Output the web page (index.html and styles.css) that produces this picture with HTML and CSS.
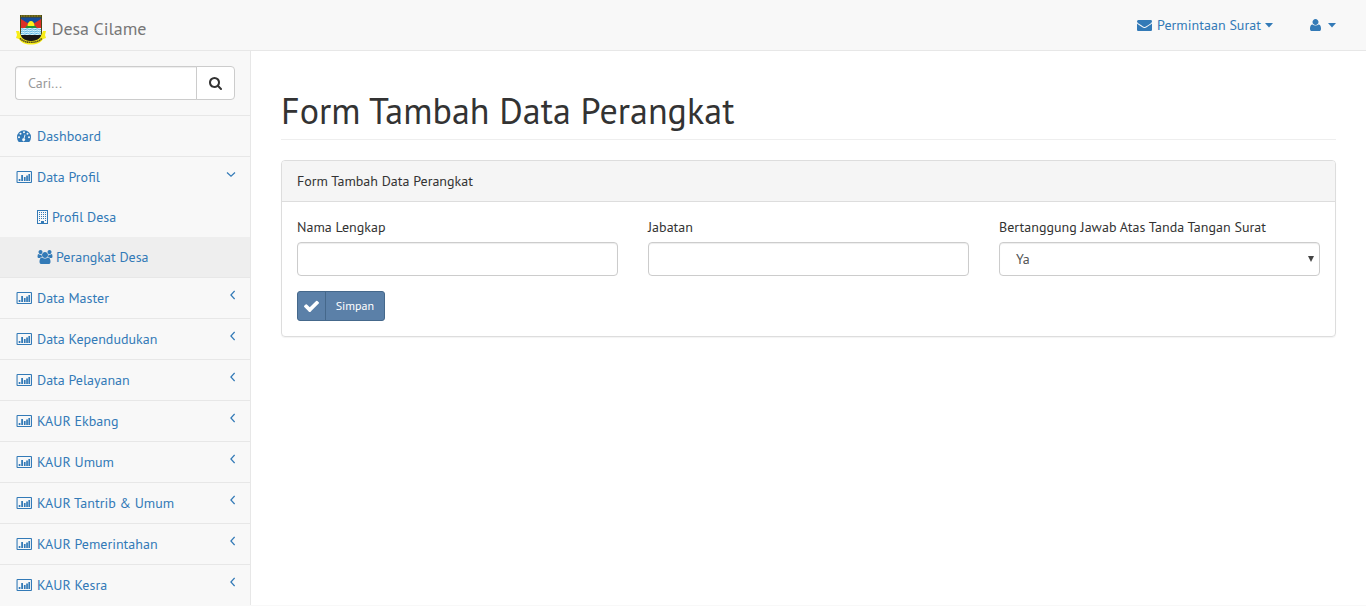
FILE: index.html
```
<!DOCTYPE html>
<html lang="id">
<head>
<meta charset="utf-8">
<title>Desa Cilame</title>
<link rel="stylesheet" href="styles.css">
</head>
<body>
<svg class="sprite" aria-hidden="true">
  <symbol id="chart" viewBox="0 0 16 14"><path fill-rule="evenodd" d="M1.500 1h13.500a1 1 0 0 1 1 1v10a1 1 0 0 1-1 1H1.500a1 1 0 0 1-1-1V2a1 1 0 0 1 1-1zm.1 1.100v9.800h13.300V2.100z"/><path d="M2.700 9h1.700v2H2.700zM5.200 5h1.800v6H5.200zM7.900 7h1.700v4H7.900zM10.200 5.500h1.700v5.500h-1.700zM12.400 4h1.600v7h-1.600z"/></symbol>
  <symbol id="left" viewBox="0 0 5 10"><path d="M4.600 1L.900 5l3.700 4" fill="none" stroke="currentColor" stroke-width="1.200"/></symbol>
  <symbol id="caret" viewBox="0 0 8 5"><path d="M0 0h8L4 4.500z"/></symbol>
</svg>
<header class="navbar">
  <a class="brand">
    <svg class="crest" viewBox="0 0 32 32">
      <path d="M5 1h22v18c0 6-5 8-11 10C10 27 5 25 5 19z" fill="#4b4715"/>
      <path d="M6 2h20" stroke="#b7a92a" stroke-width="1" stroke-dasharray="1 .6"/>
      <path d="M6 3.500h20V14H6z" fill="#154c9c"/>
      <path d="M6 5l8 5-3 4H6zM26 5l-8 5 3 4h5z" fill="#dc3027"/>
      <path d="M10 14 13 10.500h6l3 3.500z" fill="#248f39"/>
      <path d="M12.500 12a3.500 5 0 0 1 7 0z" fill="#fff21b"/>
      <path d="M6 14h20v7H6z" fill="#d5f2fb"/>
      <path d="M6 15.300q1.250-1 2.500 0t2.500 0 2.500 0 2.500 0 2.500 0 2.500 0 2.500 0 2.500 0M6 17.500q1.250-1 2.500 0t2.500 0 2.500 0 2.500 0 2.500 0 2.500 0 2.500 0 2.500 0M6 19.700q1.250-1 2.500 0t2.500 0 2.500 0 2.500 0 2.500 0 2.500 0 2.500 0 2.500 0" stroke="#49aadb" stroke-width=".9" fill="none"/>
      <path d="M6 21h20c-1 4-5 5-10 6-5-1-9-2-10-6z" fill="#171717"/>
      <path d="M1 17l3 0 2 5c1.500 3.500 5 5 10 5s8.500-1.500 10-5l2-5h3l-1 4 1 3-3 1c-2.500 4-6 5.500-12 5.500S6.500 29 4 25l-3-1 1-3z" fill="#f8ed18"/>
      <path d="M5 24.300q3.500 4 11 4t11-4" fill="none" stroke="#57501a" stroke-width="1.600" stroke-dasharray="1.600 .4"/>
    </svg>
    <span>Desa Cilame</span>
  </a>
  <nav class="toplinks">
    <a><svg class="mail" viewBox="0 128 1792 1536" preserveAspectRatio="none"><path d="M1792 710v794q0 66-47 113t-113 47h-1472q-66 0-113-47t-47-113v-794q44 49 101 87 362 246 497 345 57 42 92.500 65.500t94.500 48 110 24.500h2q51 0 110-24.500t94.500-48 92.500-65.500q170-123 498-345 57-39 100-87zm0-294q0 79-49 151t-122 123q-376 261-468 325-10 7-42.500 31t-54 38.500-52 32.500-57.500 27-50 9h-2q-23 0-50-9t-57.500-27-52-32.500-54-38.500-42.500-31q-91-64-262-182.500t-205-142.500q-62-42-117-115.500t-55-136.500q0-78 41.500-130t118.500-52h1472q65 0 112.500 47t47.500 113z"/></svg><span>Permintaan Surat</span><svg class="caret"><use href="#caret"/></svg></a>
    <a><svg class="user" viewBox="128 128 1408 1536"><path d="M1536 1399q0 109-62.500 187t-150.500 78h-982q-88 0-150.500-78t-62.500-187q0-85 8.500-160.500t31.500-152 58.500-131 94-89 134.500-34.500q131 128 377 128t377-128q76 0 134.500 34.500t94 89 58.500 131 31.500 152 8.500 160.500zm-320-887q0 159-112.500 271.500t-271.500 112.500-271.500-112.500-112.500-271.500 112.500-271.500 271.500-112.500 271.500 112.500 112.500 271.500z"/></svg><svg class="caret"><use href="#caret"/></svg></a>
  </nav>
</header>
<div class="layout">
  <aside class="sidebar">
    <div class="search"><input type="text" placeholder="Cari..."><button><svg viewBox="64 128 1664 1664"><path d="M1216 832q0-185-131.500-316.500t-316.500-131.500-316.500 131.500-131.500 316.500 131.500 316.500 316.500 131.500 316.500-131.500 131.500-316.500zm512 832q0 52-38 90t-90 38q-54 0-90-38l-343-342q-179 124-399 124-143 0-273.500-55.500t-225-150-150-225-55.500-273.500 55.500-273.500 150-225 225-150 273.500-55.500 273.500 55.500 225 150 150 225 55.500 273.500q0 220-124 399l343 343q37 37 37 90z"/></svg></button></div>
    <ul class="menu">
      <li><a><svg class="icon" viewBox="0 0 16 14"><path fill-rule="evenodd" d="M2.700 13A7.200 7.200 0 0 1 1 8.300a7 7 0 0 1 14 0A7.200 7.200 0 0 1 13.300 13zM3 7.300a1 1 0 1 0 0 2 1 1 0 0 0 0-2zm1.500-3.500a1 1 0 1 0 0 2 1 1 0 0 0 0-2zM8 2.300a1 1 0 1 0 0 2 1 1 0 0 0 0-2zm3.500 1.500a1 1 0 1 0 0 2 1 1 0 0 0 0-2zM13 7.300a1 1 0 1 0 0 2 1 1 0 0 0 0-2zM8.600 5.500l-1 3.700a1.500 1.500 0 1 0 .9.250l1-3.700z"/></svg>Dashboard</a></li>
      <li><a><svg class="icon"><use href="#chart"/></svg>Data Profil<svg class="down" viewBox="0 0 10 5"><path d="M1 .5l4 3.700L9 .5" fill="none" stroke="currentColor" stroke-width="1.200"/></svg></a>
        <ul class="submenu">
          <li><a><svg class="building" viewBox="0 0 11 14"><path fill-rule="evenodd" d="M0 0h11v14H0zm1 1v12h3v-2h3v2h3V1z"/><path d="M2 2.500h7M2 4.500h7M2 6.500h7M2 8.500h7M2 10.500h1m5 0h1" stroke="currentColor" stroke-dasharray="1 1"/></svg>Profil Desa</a></li>
          <li class="active"><a><svg class="users" viewBox="-256 0 1920 1792"><path d="M593 896q-162 5-265 128h-134q-82 0-138-40.500t-56-118.500q0-353 124-353 6 0 43.500 21t97.500 42.500 119 21.500q67 0 133-23-5 37-5 66 0 139 81 256zm1071 637q0 120-73 189.500t-194 69.500h-874q-121 0-194-69.500t-73-189.500q0-53 3.500-103.500t14-109 26.500-108.500 43-97.500 62-81 85.500-53.500 111.500-20q10 0 43 21.500t73 48 107 48 135 21.500 135-21.500 107-48 73-48 43-21.500q61 0 111.500 20t85.500 53.500 62 81 43 97.500 26.500 108.500 14 109 3.500 103.500zm-1024-1277q0 106-75 181t-181 75-181-75-75-181 75-181 181-75 181 75 75 181zm704 384q0 159-112.500 271.500t-271.500 112.500-271.500-112.500-112.500-271.500 112.500-271.500 271.500-112.500 271.500 112.500 112.500 271.500zm576 225q0 78-56 118.500t-138 40.500h-134q-103-123-265-128 81-117 81-256 0-29-5-66 66 23 133 23 59 0 119-21.500t97.500-42.500 43.500-21q124 0 124 353zm-128-609q0 106-75 181t-181 75-181-75-75-181 75-181 181-75 181 75 75 181z"/></svg>Perangkat Desa</a></li>
        </ul></li>
      <li><a><svg class="icon"><use href="#chart"/></svg>Data Master<svg class="left"><use href="#left"/></svg></a></li>
      <li><a><svg class="icon"><use href="#chart"/></svg>Data Kependudukan<svg class="left"><use href="#left"/></svg></a></li>
      <li><a><svg class="icon"><use href="#chart"/></svg>Data Pelayanan<svg class="left"><use href="#left"/></svg></a></li>
      <li><a><svg class="icon"><use href="#chart"/></svg>KAUR Ekbang<svg class="left"><use href="#left"/></svg></a></li>
      <li><a><svg class="icon"><use href="#chart"/></svg>KAUR Umum<svg class="left"><use href="#left"/></svg></a></li>
      <li><a><svg class="icon"><use href="#chart"/></svg>KAUR Tantrib &amp; Umum<svg class="left"><use href="#left"/></svg></a></li>
      <li><a><svg class="icon"><use href="#chart"/></svg>KAUR Pemerintahan<svg class="left"><use href="#left"/></svg></a></li>
      <li><a><svg class="icon"><use href="#chart"/></svg>KAUR Kesra<svg class="left"><use href="#left"/></svg></a></li>
    </ul>
  </aside>
  <main class="content">
    <h1>Form Tambah Data Perangkat</h1>
    <section class="panel">
      <div class="panel-heading">Form Tambah Data Perangkat</div>
      <form class="panel-body">
        <div class="fields">
          <label>Nama Lengkap<input type="text"></label>
          <label>Jabatan<input type="text"></label>
          <label>Bertanggung Jawab Atas Tanda Tangan Surat<span class="select">Ya<svg viewBox="0 0 6 6"><path d="M0 0h6L3 6z"/></svg></span></label>
        </div>
        <button class="save" type="button"><span class="save-icon"><svg viewBox="121 290 1550 1188"><path d="M1671 566q0 40-28 68l-724 724-136 136q-28 28-68 28t-68-28l-136-136-362-362q-28-28-28-68t28-68l136-136q28-28 68-28t68 28l294 295 656-657q28-28 68-28t68 28l136 136q28 28 28 68z"/></svg></span><span class="save-text">Simpan</span></button>
      </form>
    </section>
  </main>
</div>
</body>
</html>
```
FILE: styles.css
```
* { box-sizing: border-box; }
body {
  margin: 0;
  background: #f8f8f8;
  color: #333;
  font: 14px/20px "PT Sans", "Noto Sans", sans-serif;
  overflow: hidden;
}
svg { fill: currentColor; flex: none; display: block; }
.sprite { width: 0; height: 0; position: absolute; }
ul { list-style: none; margin: 0; padding: 0; }
a { color: #337ab7; }
input, button { font: inherit; }

.navbar {
  height: 51px;
  border-bottom: 1px solid #e7e7e7;
  display: flex;
  justify-content: space-between;
  padding: 0 30px 0 15px;
}
.brand { display: flex; color: #777; font-size: 18px; letter-spacing: -.06px; padding-top: 14px; }
.brand span { padding: 5px 0 0 4.700px; }
.crest { width: 32px; height: 32px; }
.toplinks { display: flex; gap: 37px; height: 50px; align-items: center; }
.toplinks a { display: flex; align-items: center; }
.mail { width: 15px; height: 12px; margin-right: 5px; }
.toplinks span { letter-spacing: .03px; }
.user { width: 11px; height: 12px; margin-right: 7px; }
.caret { width: 8px; height: 5px; margin-left: 4px; }
.user + .caret { margin-left: 0; }

.layout { display: flex; height: 554px; }
.sidebar { width: 250px; flex: none; }
.search { display: flex; padding: 15px; border-bottom: 1px solid #e7e7e7; height: 65px; }
.search input {
  width: 182px; height: 34px;
  border: 1px solid #ccc; border-right: 0;
  border-radius: 4px 0 0 4px;
  padding: 6px 12px;
  box-shadow: inset 0 1px 1px rgba(0,0,0,.075);
}
.search input::placeholder { color: #999; }
.search button {
  width: 39px; height: 34px; margin-left: -1px;
  border: 1px solid #ccc; border-radius: 0 4px 4px 0;
  background: #fff; color: #333;
  padding: 0 0 0 12px;
}
.search button svg { width: 13px; height: 13px; }
.menu > li { border-bottom: 1px solid #e7e7e7; }
.menu a { display: flex; align-items: center; height: 40px; padding: 0 15px 0 16px; }
.icon { width: 16px; height: 14px; margin-right: 5px; }
.left { width: 5px; height: 10px; margin: 0 0 6px auto; }
.down { width: 10px; height: 5px; margin: 0 -1px 6px auto; }
.menu .submenu a { padding-left: 37px; }
.submenu .active { background: #eee; }
.building { width: 11px; height: 14px; margin-right: 4px; }
.users { width: 15px; height: 14px; margin-right: 4px; overflow: visible; }
.users path { transform: translateX(-192px); }

.content {
  flex: 1;
  background: #fff;
  border-left: 1px solid #e7e7e7;
  padding: 40px 30px 0;
}
h1 {
  margin: 0 0 20px;
  padding-bottom: 9px;
  border-bottom: 1px solid #eee;
  font-size: 36px; font-weight: 400; line-height: 39px;
  letter-spacing: .04px;
}
.panel { border: 1px solid #ddd; border-radius: 4px; box-shadow: 0 1px 1px rgba(0,0,0,.05); }
.panel-heading { height: 41px; padding: 10px 15px; background: #f5f5f5; border-bottom: 1px solid #ddd; border-radius: 3px 3px 0 0; }
.panel-body { padding: 15px; }
.fields { display: grid; grid-template-columns: repeat(3, 1fr); gap: 30px; margin-bottom: 15px; letter-spacing: .02px; }
.fields input, .select {
  display: flex; align-items: center; justify-content: space-between;
  width: 100%; height: 34px; margin-top: 5px;
  border: 1px solid #ccc; border-radius: 4px;
  box-shadow: inset 0 1px 1px rgba(0,0,0,.075);
}
.select { color: #555; padding: 0 5px 0 16px; }
.select svg { width: 6px; height: 6px; color: #444; }
.save {
  display: flex; align-items: stretch;
  width: 88px; height: 30px; padding: 0;
  border: 1px solid #45688b; border-radius: 3px;
  background: #5b80a8; color: #fff;
  font-size: 12px; line-height: 18px;
}
.save-icon { width: 28px; display: grid; place-items: center; border-right: 1px solid #45688b; }
.save-icon svg { width: 15px; height: 12px; }
.save-text { padding: 5px 10px; }
```
